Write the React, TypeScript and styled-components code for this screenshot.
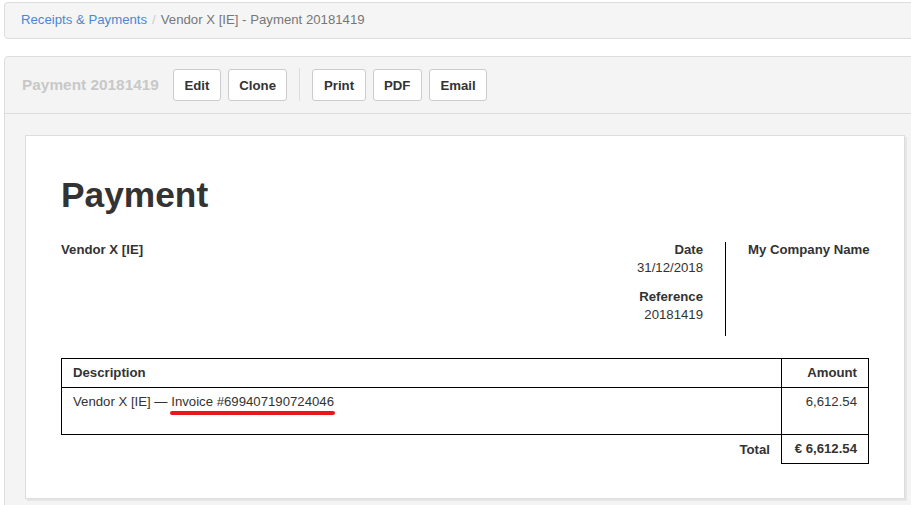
import React from "react";
import styled, { createGlobalStyle } from "styled-components";

const Global = createGlobalStyle`
  html, body { margin: 0; padding: 0; background: #fff; overflow: hidden; }
  body { font-family: "Liberation Sans", Arial, sans-serif; font-size: 13.2px; line-height: 1.4; color: #333; }
  * { box-sizing: border-box; }
`;

const Page = styled.div`
  width: 921px;
  padding: 2px 0 0 4px;
  display: flex;
  flex-direction: column;
  gap: 17px;
`;

const Breadcrumb = styled.nav`
  height: 37px;
  border: 1px solid #ddd;
  border-radius: 4px;
  background: #f5f5f5;
  display: flex;
  align-items: center;
  padding: 0 16px 1px;
  gap: 5px;
`;

const Crumb = styled.a`
  color: #4a87d4;
  text-decoration: none;
`;

const Sep = styled.span`
  color: #ccc;
`;

const Active = styled.span`
  color: #777;
`;

const Panel = styled.section`
  border: 1px solid #ddd;
  border-radius: 4px 0 0 0;
  background: #f4f4f4;
  height: 460px;
`;

const PanelHeader = styled.header`
  height: 57px;
  border-bottom: 1px solid #ddd;
  display: flex;
  align-items: center;
  padding: 0 0 0 17px;
`;

const PanelTitle = styled.h3`
  margin: 0 14px 0 0;
  font-size: 15.4px;
  font-weight: bold;
  color: #c8c8c8;
  line-height: 1;
`;

const Group = styled.div`
  display: flex;
  gap: 7px;
`;

const Divider = styled.div`
  width: 1px;
  height: 33px;
  background: #ddd;
  margin: -1px 12px 0 12px;
`;

const Button = styled.button`
  height: 32px;
  padding: 0 10.5px;
  font-family: inherit;
  font-size: 13.2px;
  font-weight: bold;
  color: #333;
  background: #fff;
  border: 1px solid #ccc;
  border-radius: 3px;
  cursor: pointer;
`;

const PanelBody = styled.div`
  padding: 21px 16px 0 20px;
`;

const Sheet = styled.article`
  width: 880px;
  background: #fff;
  border: 1px solid #ddd;
  box-shadow: 2px 2px 0 #e6e6e6;
  padding: 39px 35px 34px;
`;

const Heading = styled.h1`
  margin: 0;
  font-size: 35.3px;
  font-weight: bold;
  line-height: 40px;
  color: #333;
`;

const Parties = styled.div`
  display: flex;
  margin-top: 26px;
`;

const Party = styled.div`
  flex: 1;
  font-weight: bold;
`;

const Meta = styled.div`
  text-align: right;
  border-right: 1px solid #000;
  padding: 0 22px 0 0;
  height: 94px;
  margin-top: 1px;
`;

const MetaItem = styled.div`
  margin-bottom: 11px;
  margin-top: -1px;
`;

const MetaLabel = styled.div`
  font-weight: bold;
`;

const Company = styled.div`
  padding-left: 22px;
  font-weight: bold;
  width: 143px;
  white-space: nowrap;
`;

const Table = styled.table`
  width: 100%;
  margin-top: 22px;
  border-collapse: collapse;
`;

const Th = styled.th<{ $right?: boolean }>`
  border: 1px solid #000;
  padding: 5px 11px 4px;
  height: 29px;
  text-align: ${(p) => (p.$right ? "right" : "left")};
  font-weight: bold;
`;

const Td = styled.td<{ $right?: boolean }>`
  border: 1px solid #000;
  padding: 5px 11px 3px;
  height: 47px;
  vertical-align: top;
  text-align: ${(p) => (p.$right ? "right" : "left")};
`;

const AmountCol = styled.col`
  width: 87px;
`;

const TotalLabel = styled.td`
  text-align: right;
  font-weight: bold;
  padding: 5px 11px 4px;
  height: 29px;
`;

const TotalValue = styled.td`
  border: 1px solid #000;
  text-align: right;
  font-weight: bold;
  padding: 5px 11px 4px;
`;

const Marked = styled.span`
  position: relative;
  &::after {
    content: "";
    position: absolute;
    left: -1px;
    right: -1px;
    bottom: -6px;
    height: 4px;
    border-radius: 2px;
    background: #e8161f;
  }
`;

export default function App() {
  return (
    <>
      <Global />
      <Page>
        <Breadcrumb>
          <Crumb href="#">Receipts &amp; Payments</Crumb>
          <Sep>/</Sep>
          <Active>Vendor X [IE] - Payment 20181419</Active>
        </Breadcrumb>
        <Panel>
          <PanelHeader>
            <PanelTitle>Payment 20181419</PanelTitle>
            <Group>
              <Button>Edit</Button>
              <Button>Clone</Button>
            </Group>
            <Divider />
            <Group>
              <Button>Print</Button>
              <Button>PDF</Button>
              <Button>Email</Button>
            </Group>
          </PanelHeader>
          <PanelBody>
            <Sheet>
              <Heading>Payment</Heading>
              <Parties>
                <Party>Vendor X [IE]</Party>
                <Meta>
                  <MetaItem>
                    <MetaLabel>Date</MetaLabel>
                    <div>31/12/2018</div>
                  </MetaItem>
                  <MetaItem>
                    <MetaLabel>Reference</MetaLabel>
                    <div>20181419</div>
                  </MetaItem>
                </Meta>
                <Company>My Company Name</Company>
              </Parties>
              <Table>
                <colgroup>
                  <col />
                  <AmountCol />
                </colgroup>
                <thead>
                  <tr>
                    <Th>Description</Th>
                    <Th $right>Amount</Th>
                  </tr>
                </thead>
                <tbody>
                  <tr>
                    <Td>
                      Vendor X [IE] — <Marked>Invoice #699407190724046</Marked>
                    </Td>
                    <Td $right>6,612.54</Td>
                  </tr>
                  <tr>
                    <TotalLabel>Total</TotalLabel>
                    <TotalValue>€ 6,612.54</TotalValue>
                  </tr>
                </tbody>
              </Table>
            </Sheet>
          </PanelBody>
        </Panel>
      </Page>
    </>
  );
}
